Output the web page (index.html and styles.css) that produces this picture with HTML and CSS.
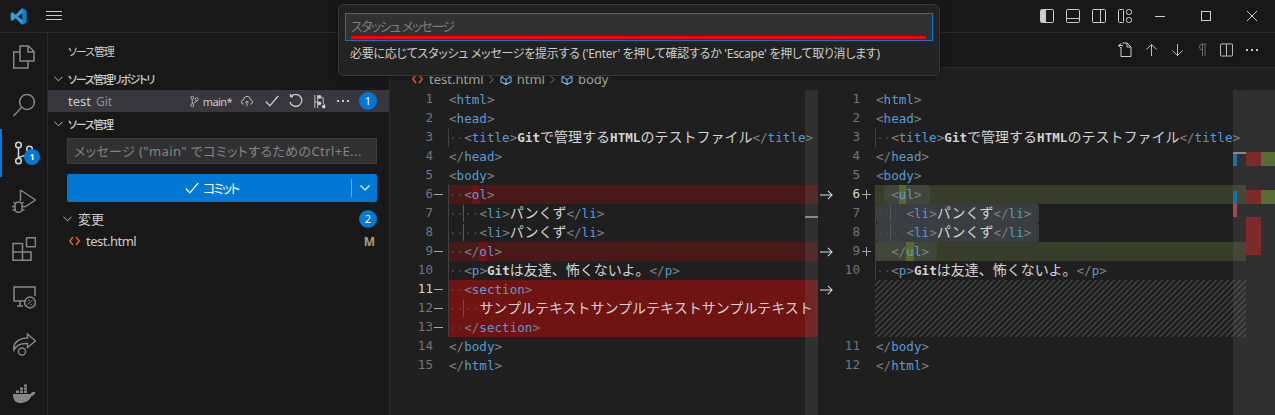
FILE: index.html
```html
<!DOCTYPE html>
<html lang="ja">
<head>
<meta charset="utf-8">
<title>ソース管理</title>
<link rel="stylesheet" href="styles.css">
</head>
<body>
<div class="app">
  <header class="titlebar">
    <svg class="logo" viewBox="0 0 100 100"><path d="M71 2 96 14V86L71 98 33 60 14 75 4 70V30L14 25 33 40ZM74 28 47 50 74 72Z" fill="#2b9fe8" fill-rule="evenodd"/><path d="M71 2 96 14V86L71 98 74 72V28Z" fill="#0f7fd0"/></svg>
    <svg class="hamburger" viewBox="0 0 16 10"><path d="M0 .5H16M0 4.5H16M0 8.5H16" stroke="#ccc" fill="none"/></svg>
    <div class="spacer"></div>
    <div class="layout-icons">
      <svg viewBox="0 0 14 14"><rect x=".5" y=".5" width="13" height="13" rx="1" class="ol"/><rect x="1" y="1" width="5" height="12" fill="#ccc"/></svg>
      <svg viewBox="0 0 14 14"><rect x=".5" y=".5" width="13" height="13" rx="1" class="ol"/><path d="M1 9.5H13" class="ol"/></svg>
      <svg viewBox="0 0 14 14"><rect x=".5" y=".5" width="13" height="13" rx="1" class="ol"/><path d="M8.5 1V13" class="ol"/></svg>
      <svg viewBox="0 0 14 14"><rect x=".5" y=".5" width="5" height="13" rx="1" class="ol"/><rect x="8.5" y=".5" width="5" height="5" rx="2" class="ol"/><rect x="8.5" y="8.5" width="5" height="5" rx="2" class="ol"/></svg>
    </div>
    <div class="win-controls">
      <span class="win"><svg viewBox="0 0 10 10"><path d="M0 5.5H10" class="ol"/></svg></span>
      <span class="win"><svg viewBox="0 0 10 10"><rect x=".5" y=".5" width="9" height="9" class="ol"/></svg></span>
      <span class="win"><svg viewBox="0 0 10 10"><path d="M0 0 10 10M10 0 0 10" class="ol"/></svg></span>
    </div>
  </header>

  <div class="quick">
    <div class="quick-input"><span>スタッシュ メッセージ</span></div>
    <div class="quick-mark"></div>
    <div class="quick-msg">必要に応じてスタッシュ メッセージを提示する ('Enter' を押して確認するか 'Escape' を押して取り消します)</div>
  </div>

  <div class="main">
    <nav class="activity">
      <a class="act"><svg viewBox="0 0 24 24"><path d="M8 7H1.7V23H16V16M8 1H16.5L22 6.5V16H8ZM16 1V7H22" class="ai"/></svg></a>
      <a class="act"><svg viewBox="0 0 24 24"><circle cx="15" cy="9" r="7.4" class="ai"/><path d="M9.7 14.3 1.5 23" class="ai"/></svg></a>
      <a class="act on"><svg viewBox="0 0 24 24"><circle cx="6.5" cy="4" r="2.8" class="ai lit"/><circle cx="6.5" cy="20" r="2.8" class="ai lit"/><circle cx="17.5" cy="8" r="2.8" class="ai lit"/><path d="M6.5 6.8V17.2M17.5 10.8C17.5 15 9 14 6.5 17.2" class="ai lit"/></svg><b class="badge small">1</b></a>
      <a class="act"><svg viewBox="0 0 24 24"><path d="M8.5 1 23.5 11 13 18M8.5 1V12" class="ai"/><path d="M3 16.5a3.500 3.500 0 0 1 7 0V20a3.500 3.500 0 0 1-7 0ZM3 17.500H0M10 17.500h3M3 21H.5M10 21h2.500M3.500 15 1.500 13M9.500 15l2-2" class="ai"/></svg></a>
      <a class="act"><svg viewBox="0 0 24 24"><rect x="14.5" y=".7" width="9" height="9" rx=".6" class="ai"/><path d="M1 6.5H10.5V15H19V23.3H1ZM1 15H10.5V23.3" class="ai"/></svg></a>
      <a class="act"><svg viewBox="0 0 24 24"><path d="M14 16H2V2H23V11M5 21H11M8 16V21" class="ai"/><circle cx="18" cy="17.5" r="5.4" class="ai"/><path d="M15.5 19.5 18 17M18 17.5l2.5-2.5M15.8 16.3l1-1h1M20.2 18.8l-1 1h-1" class="ai thin"/></svg></a>
      <a class="act"><svg viewBox="0 0 24 24"><path d="M15.5 1 23.5 8 15.5 14.5V10.5C9 10 4 12.5 2 17 .5 10 7 5 15.5 5Z" class="ai"/><circle cx="10" cy="18.5" r="3.6" class="ai"/></svg></a>
      <a class="act"><svg viewBox="0 0 24 24"><path d="M1 13H18.5C19.5 11 22 10.500 23.500 11.500 22.500 14 20.500 15 19.500 15 17.500 20 13 22 8 22 3 22 1 18 1 13Z" fill="#868686"/><path d="M4 9.500h3v2.500H4ZM8 9.500h3v2.500H8ZM12 9.500h3v2.500h-3ZM8 6.500h3v2.300H8ZM12 6.500h3v2.300h-3ZM12 3.500h3v2.300h-3Z" fill="#868686"/></svg></a>
    </nav>

    <aside class="side">
      <div class="side-title">ソース管理</div>
      <div class="sec-head"><svg class="chev" viewBox="0 0 10 6"><path d="M.5.5 5 5 9.500.5" class="ol"/></svg><span>ソース管理リポジトリ</span></div>
      <div class="repo">
        <span class="repo-name">test</span><span class="repo-kind">Git</span>
        <span class="spacer"></span>
        <svg class="ri branch" viewBox="0 0 12 16"><circle cx="3" cy="3" r="2" class="ol"/><circle cx="3" cy="13" r="2" class="ol"/><circle cx="9" cy="5" r="2" class="ol"/><path d="M3 5V11M9 7C9 10 4 9 3 11" class="ol"/></svg>
        <span class="repo-branch">main*</span>
        <svg class="ri cloud" viewBox="0 0 14 12"><path d="M3.500 9H3A2.500 2.500 0 0 1 3 4 4 4 0 0 1 11 4 2.500 2.500 0 0 1 11 9H10.500M7 11.500V5.500M5 7.500l2-2 2 2" class="ol"/></svg>
        <svg class="ri check" viewBox="0 0 14 12"><path d="M.8 6.500 4.800 10.800 13.200 1" class="ol s13"/></svg>
        <svg class="ri sync" viewBox="0 0 14 14"><path d="M4 1.700H1.500V-1M1.700 2.200A6 6 0 1 1 1 7" class="ol s13" transform="translate(0 1)"/></svg>
        <svg class="ri graph" viewBox="0 0 14 16"><path d="M2 1V15M5 1V15M2 8.500H5M8 4H11V9C11 11 13 11 13 12" class="ol"/><circle cx="7" cy="3" r="2" fill="#ccc"/><circle cx="7" cy="10" r="2" fill="#ccc"/><circle cx="11.500" cy="13.500" r="2" fill="#ccc"/></svg>
        <span class="dots"><i></i><i></i><i></i></span>
        <b class="badge">1</b>
      </div>
      <div class="sec-head second"><svg class="chev" viewBox="0 0 10 6"><path d="M.5.5 5 5 9.500.5" class="ol"/></svg><span>ソース管理</span></div>
      <div class="commit-input">メッセージ ("main" でコミットするためのCtrl+E...</div>
      <div class="commit-btn">
        <div class="commit-label"><svg viewBox="0 0 14 12"><path d="M.8 6.500 4.800 10.800 13.200 1" class="wh"/></svg><span>コミット</span></div>
        <div class="commit-more"><svg viewBox="0 0 10 6"><path d="M.5.5 5 5 9.500.5" class="wh"/></svg></div>
      </div>
      <div class="changes"><svg class="chev" viewBox="0 0 10 6"><path d="M.5.5 5 5 9.500.5" class="ol"/></svg><span>変更</span><span class="spacer"></span><b class="badge">2</b></div>
      <div class="file">
        <svg class="html-ic" viewBox="0 0 11 10"><path d="M4 1 .8 5 4 9M7 1 10.200 5 7 9" class="or"/></svg>
        <span class="file-name">test.html</span><span class="spacer"></span><b class="mod">M</b>
      </div>
    </aside>

    <section class="editor">
      <div class="actions">
        <svg class="ea wide" viewBox="0 0 16 16"><path d="M5 5V14.500H15V5L11 1H6.500M11 1V5H15M5.500 1.500 2.500 3.500 5 6M2.500 3.500H7" class="ol"/></svg>
        <svg class="ea" viewBox="0 0 14 14"><path d="M7 13.500V1M1.500 6.500 7 1 12.500 6.500" class="ol"/></svg>
        <svg class="ea" viewBox="0 0 14 14"><path d="M7 .5V13M1.500 7.500 7 13 12.500 7.500" class="ol"/></svg>
        <svg class="ea dim" viewBox="0 0 10 14"><path d="M5 1H9.500M5.500 1V13M8 1V13M5.500 7A3 3 0 0 1 5.500 1Z" class="ol"/></svg>
        <svg class="ea" viewBox="0 0 14 14"><rect x=".5" y=".5" width="13" height="13" rx="1" class="ol"/><path d="M7 1V13" class="ol"/></svg>
        <span class="dots"><i></i><i></i><i></i></span>
      </div>
      <div class="crumbs">
        <svg class="html-ic" viewBox="0 0 11 10"><path d="M4 1 .8 5 4 9M7 1 10.200 5 7 9" class="or"/></svg>
        <span>test.html</span>
        <svg class="sep" viewBox="0 0 6 10"><path d="M.5.5 5 5 .5 9.500" class="gr"/></svg>
        <svg class="cube" viewBox="0 0 12 11"><path d="M1 3 6 .7 11 3V8L6 10.300 1 8ZM1 3 6 5.500 11 3M6 5.500V10.300" class="bl"/></svg>
        <span>html</span>
        <svg class="sep" viewBox="0 0 6 10"><path d="M.5.5 5 5 .5 9.500" class="gr"/></svg>
        <svg class="cube" viewBox="0 0 12 11"><path d="M1 3 6 .7 11 3V8L6 10.300 1 8ZM1 3 6 5.500 11 3M6 5.500V10.300" class="bl"/></svg>
        <span>body</span>
      </div>
      <div class="diff">
        <div class="pane left">
          <div class="line"><span class="num">1</span><span class="sign"></span><span class="code"><i class="p">&lt;</i><i class="t">html</i><i class="p">&gt;</i></span></div>
          <div class="line"><span class="num">2</span><span class="sign"></span><span class="code"><i class="p">&lt;</i><i class="t">head</i><i class="p">&gt;</i></span></div>
          <div class="line"><span class="num">3</span><span class="sign"></span><span class="code guide"><i class="w">··</i><i class="p">&lt;</i><i class="t">title</i><i class="p">&gt;</i><i class="x">Git</i>で管理する<i class="x">HTML</i>のテストファイル<i class="p">&lt;/</i><i class="t">title</i><i class="p">&gt;</i></span></div>
          <div class="line"><span class="num">4</span><span class="sign"></span><span class="code"><i class="p">&lt;/</i><i class="t">head</i><i class="p">&gt;</i></span></div>
          <div class="line"><span class="num">5</span><span class="sign"></span><span class="code"><i class="p">&lt;</i><i class="t">body</i><i class="p">&gt;</i></span></div>
          <div class="line"><span class="num">6</span><span class="sign minus"></span><span class="code del guide"><i class="w">··</i><i class="p">&lt;</i><i class="t dc">o</i><i class="t">l</i><i class="p">&gt;</i></span></div>
          <div class="line"><span class="num">7</span><span class="sign"></span><span class="code guide"><i class="w">··</i><i class="w g2">··</i><i class="p">&lt;</i><i class="t">li</i><i class="p">&gt;</i>パンくず<i class="p">&lt;/</i><i class="t">li</i><i class="p">&gt;</i></span></div>
          <div class="line"><span class="num">8</span><span class="sign"></span><span class="code guide"><i class="w">··</i><i class="w g2">··</i><i class="p">&lt;</i><i class="t">li</i><i class="p">&gt;</i>パンくず<i class="p">&lt;/</i><i class="t">li</i><i class="p">&gt;</i></span></div>
          <div class="line"><span class="num">9</span><span class="sign minus"></span><span class="code del guide"><i class="w">··</i><i class="p">&lt;/</i><i class="t dc">o</i><i class="t">l</i><i class="p">&gt;</i></span></div>
          <div class="line"><span class="num">10</span><span class="sign"></span><span class="code guide"><i class="w">··</i><i class="p">&lt;</i><i class="t">p</i><i class="p">&gt;</i><i class="x">Git</i>は友達、怖くないよ。<i class="p">&lt;/</i><i class="t">p</i><i class="p">&gt;</i></span></div>
          <div class="line"><span class="num cur">11</span><span class="sign minus"></span><span class="code delx guide"><i class="w">··</i><i class="p">&lt;</i><i class="t">section</i><i class="p">&gt;</i></span></div>
          <div class="line"><span class="num">12</span><span class="sign minus"></span><span class="code delx guide"><i class="w">··</i><i class="w g2">··</i>サンプルテキストサンプルテキストサンプルテキスト</span></div>
          <div class="line"><span class="num">13</span><span class="sign minus"></span><span class="code delx guide"><i class="w">··</i><i class="p">&lt;/</i><i class="t">section</i><i class="p">&gt;</i></span></div>
          <div class="line"><span class="num">14</span><span class="sign"></span><span class="code"><i class="p">&lt;/</i><i class="t">body</i><i class="p">&gt;</i></span></div>
          <div class="line"><span class="num">15</span><span class="sign"></span><span class="code"><i class="p">&lt;/</i><i class="t">html</i><i class="p">&gt;</i></span></div>
          <div class="slider"><div class="slider-mark"></div></div>
        </div>
        <div class="pane right">
          <div class="lines">
            <div class="line"><span class="arrow"></span><span class="num">1</span><span class="sign"></span><span class="code"><i class="p">&lt;</i><i class="t">html</i><i class="p">&gt;</i></span></div>
            <div class="line"><span class="arrow"></span><span class="num">2</span><span class="sign"></span><span class="code"><i class="p">&lt;</i><i class="t">head</i><i class="p">&gt;</i></span></div>
            <div class="line"><span class="arrow"></span><span class="num">3</span><span class="sign"></span><span class="code guide"><i class="w">··</i><i class="p">&lt;</i><i class="t">title</i><i class="p">&gt;</i><i class="x">Git</i>で管理する<i class="x">HTML</i>のテストファイル<i class="p">&lt;/</i><i class="t">title</i><i class="p">&gt;</i></span></div>
            <div class="line"><span class="arrow"></span><span class="num">4</span><span class="sign"></span><span class="code"><i class="p">&lt;/</i><i class="t">head</i><i class="p">&gt;</i></span></div>
            <div class="line"><span class="arrow"></span><span class="num">5</span><span class="sign"></span><span class="code"><i class="p">&lt;</i><i class="t">body</i><i class="p">&gt;</i></span></div>
            <div class="line"><span class="arrow"><svg viewBox="0 0 14 10"><path d="M0 5H13M8.500.5 13 5 8.500 9.500" class="ar"/></svg></span><span class="num cur">6</span><span class="sign plus"></span><span class="code ins guide"><i class="w half">·</i><span class="sel"><i class="w half">·</i><i class="p">&lt;</i><i class="t ic">u</i><i class="t">l</i><i class="p">&gt;</i></span></span></div>
            <div class="line"><span class="arrow"></span><span class="num">7</span><span class="sign"></span><span class="code guide"><span class="sel"><i class="w">··</i><i class="w g2">··</i><i class="p">&lt;</i><i class="t">li</i><i class="p">&gt;</i>パンくず<i class="p">&lt;/</i><i class="t">li</i><i class="p">&gt;</i></span></span></div>
            <div class="line"><span class="arrow"></span><span class="num">8</span><span class="sign"></span><span class="code guide"><span class="sel"><i class="w">··</i><i class="w g2">··</i><i class="p">&lt;</i><i class="t">li</i><i class="p">&gt;</i>パンくず<i class="p">&lt;/</i><i class="t">li</i><i class="p">&gt;</i></span></span></div>
            <div class="line"><span class="arrow"><svg viewBox="0 0 14 10"><path d="M0 5H13M8.500.5 13 5 8.500 9.500" class="ar"/></svg></span><span class="num">9</span><span class="sign plus"></span><span class="code ins guide"><span class="sel"><i class="w">··</i><i class="p">&lt;/</i><i class="t ic">u</i><i class="t">l</i><i class="p">&gt;</i></span></span></div>
            <div class="line"><span class="arrow"></span><span class="num">10</span><span class="sign"></span><span class="code guide"><i class="w">··</i><i class="p">&lt;</i><i class="t">p</i><i class="p">&gt;</i><i class="x">Git</i>は友達、怖くないよ。<i class="p">&lt;/</i><i class="t">p</i><i class="p">&gt;</i></span></div>
            <div class="line hatch-row"><span class="arrow"><svg viewBox="0 0 14 10"><path d="M0 5H13M8.500.5 13 5 8.500 9.500" class="ar"/></svg></span><span class="num"></span><span class="sign"></span><span class="code hatch"></span></div>
            <div class="line"><span class="arrow"></span><span class="num">11</span><span class="sign"></span><span class="code"><i class="p">&lt;/</i><i class="t">body</i><i class="p">&gt;</i></span></div>
            <div class="line"><span class="arrow"></span><span class="num">12</span><span class="sign"></span><span class="code"><i class="p">&lt;/</i><i class="t">html</i><i class="p">&gt;</i></span></div>
            <div class="slider"><div class="tick t1"></div><div class="tick t2"></div><div class="tick t3"></div><div class="tick t4"></div></div>
          </div>
          <div class="overview">
            <div class="ov-row r1"><i class="red"></i><i class="grn"></i></div>
            <div class="ov-row r2"><i class="red"></i><i class="grn"></i></div>
            <div class="ov-row r3"><i class="red"></i></div>
          </div>
        </div>
      </div>
    </section>
  </div>
</div>
</body>
</html>
```
FILE: styles.css
```css
* { box-sizing: border-box; }
html, body { margin: 0; height: 100%; }
body { background: #181818; color: #ccc; font: 13px "Noto Sans", "Noto Sans CJK JP", sans-serif; font-feature-settings: "palt"; overflow: hidden; }
i { font-style: normal; }
svg { display: block; flex: none; }
.spacer { flex: 1; }
.ol { fill: none; stroke: #ccc; stroke-width: 1; }
.s13 { stroke-width: 1.3; }
.wh { fill: none; stroke: #fff; stroke-width: 1.2; }
.or { fill: none; stroke: #e8592a; stroke-width: 1.6; }
.gr { fill: none; stroke: #999; stroke-width: 1; }
.bl { fill: none; stroke: #75beff; stroke-width: 1.1; }
.ar { fill: none; stroke: #ddd; stroke-width: 1.1; }
.ai { fill: none; stroke: #868686; stroke-width: 1.5; }
.ai.lit { stroke: #d7d7d7; }
.ai.thin { stroke-width: 1; }

.app { height: 415px; display: flex; flex-direction: column; position: relative; }

.titlebar { height: 33px; flex: none; display: flex; align-items: center; border-bottom: 1px solid #2b2b2b; padding-left: 10px; }
.logo { width: 17px; height: 17px; }
.hamburger { width: 16px; height: 10px; margin-left: 19px; }
.layout-icons { display: flex; gap: 12px; margin-right: 5px; }
.layout-icons svg { width: 14px; height: 14px; }
.win-controls { display: flex; }
.win { width: 46px; height: 32px; display: flex; align-items: center; justify-content: center; }
.win svg { width: 10px; height: 10px; }

.quick { position: absolute; left: 338px; top: 4px; width: 602px; height: 72px; background: #222; border: 1px solid #383838; border-radius: 6px; padding: 8px 6px; z-index: 5; box-shadow: 0 0 8px rgba(0,0,0,.4); }
.quick-input { height: 28px; background: #313131; border: 1px solid #0078d4; color: #7d7d7d; padding-left: 5px; line-height: 25px; font-size: 13px; letter-spacing: -1.600px; word-spacing: 1px; }
.quick-mark { position: absolute; left: 12px; top: 31px; width: 575px; height: 3px; background: #f00; }
.quick-msg { margin: 4px 0 0 5px; font-size: 12px; line-height: 18px; color: #ccc; white-space: nowrap; letter-spacing: -.27px; }

.main { flex: 1; display: flex; min-height: 0; }
.activity { width: 48px; flex: none; border-right: 1px solid #2b2b2b; }
.act { height: 48px; display: flex; align-items: center; justify-content: center; position: relative; }
.act svg { width: 24px; height: 24px; }
.act.on { box-shadow: inset 2px 0 0 #0078d4; }
.badge { width: 18px; height: 18px; border-radius: 50%; background: #0078d4; color: #fff; font: 11px/18px "Noto Sans", sans-serif; text-align: center; flex: none; }
.badge.small { position: absolute; left: 24px; top: 20px; width: 16px; height: 16px; line-height: 16px; font-size: 9px; font-weight: 700; }

.side { width: 342px; flex: none; background: #181818; border-right: 1px solid #2b2b2b; display: flex; flex-direction: column; }
.side-title { height: 35px; padding-left: 20px; font-size: 11px; line-height: 38px; color: #ccc; letter-spacing: -1.100px; }
.sec-head { height: 22px; display: flex; align-items: center; font-size: 11px; font-weight: 500; color: #ccc; padding-left: 6px; letter-spacing: -1.300px; }
.sec-head span { padding-bottom: 1px; }
.sec-head.second { height: 24px; }
.chev { width: 9px; height: 6px; margin-right: 5px; }
.repo { height: 22px; background: #37373d; display: flex; align-items: center; padding: 0 12px 0 20px; }
.repo-name { font-size: 13px; }
.repo-kind { font-size: 12px; color: #8f8f93; margin-left: 5px; }
.branch { width: 9px; height: 13px; margin-right: 4px; }
.repo-branch { font-size: 11px; margin-right: 9px; letter-spacing: -.6px; }
.cloud { width: 12px; height: 11px; margin-right: 12px; }
.check { width: 14px; height: 12px; margin-right: 10px; }
.sync { width: 14px; height: 14px; margin-right: 10px; }
.graph { width: 13px; height: 15px; margin-right: 11px; }
.dots { display: flex; gap: 3px; width: 13px; margin-right: 9px; }
.dots i { width: 2px; height: 2px; background: #ccc; }
.commit-input { height: 26px; margin: 2px 12px 0 19px; background: #313131; border: 1px solid #3c3c3c; color: #858585; font-size: 13px; line-height: 24px; padding-left: 6px; white-space: nowrap; overflow: hidden; letter-spacing: .4px; }
.commit-btn { height: 28px; margin: 10px 12px 0 19px; background: #0078d4; border-radius: 2px; display: flex; align-items: center; color: #fff; }
.commit-label { flex: 1; display: flex; align-items: center; justify-content: center; gap: 4px; font-size: 13px; padding-left: 5px; letter-spacing: -2px; }
.commit-label span { padding-bottom: 2px; }
.commit-label svg { width: 14px; height: 12px; }
.commit-more { width: 26px; height: 18px; border-left: 1px solid rgba(255,255,255,.4); display: flex; align-items: center; justify-content: center; }
.commit-more svg { width: 10px; height: 6px; }
.changes { height: 22px; margin-top: 6px; display: flex; align-items: center; padding: 0 12px 0 15px; font-size: 13px; }
.changes .chev { margin-right: 6px; }
.changes span { padding-bottom: 2px; }
.changes .spacer { padding: 0; }
.file { height: 22px; display: flex; align-items: center; padding: 0 14px 0 21px; font-size: 13px; }
.file-name { letter-spacing: -.5px; }
.html-ic { width: 11px; height: 10px; }
.file .html-ic { margin-right: 6px; }
.mod { font-size: 12px; font-weight: 700; color: #b29b76; }

.editor { flex: 1; min-width: 0; display: flex; flex-direction: column; background: #1f1f1f; }
.actions { height: 35px; flex: none; background: #181818; border-bottom: 1px solid #2b2b2b; display: flex; align-items: center; justify-content: flex-end; gap: 13px; padding: 0 16px 0 0; }
.ea { height: 14px; width: 13px; }
.ea.wide { width: 16px; height: 16px; }
.ea.dim { width: 10px; opacity: .45; }
.actions .dots { margin: 0; width: 13px; }
.crumbs { height: 22px; flex: none; display: flex; align-items: center; padding-left: 22px; font-size: 13px; color: #a9a9a9; }
.crumbs .html-ic { margin-right: 6px; }
.sep { width: 5px; height: 9px; margin: 0 5px; }
.cube { width: 12px; height: 11px; margin: 0 5px 0 1px; }

.diff { flex: 1; min-height: 0; display: flex; }
.pane { position: relative; overflow: hidden; }
.pane.left { width: 428px; flex: none; }
.pane.right { flex: 1; display: flex; min-width: 0; }
.lines { flex: 1; min-width: 0; position: relative; overflow: hidden; }
.overview { width: 29px; flex: none; background: #2f2f2f; position: relative; display: flex; flex-direction: column; }

.line { height: 19px; display: flex; font: 14px/17px "Noto Sans CJK JP", sans-serif; font-feature-settings: normal; color: #d4d4d4; white-space: pre; }
.num, .sign, .p, .t, .w, .x { font-family: "DejaVu Sans Mono", monospace; font-size: 12.600px; }
.num { width: 43px; flex: none; text-align: right; color: #6e7681; }
.num.cur { color: #d4d4d4; }
.sign { width: 15px; flex: none; position: relative; }
.sign.minus::before { content: ""; position: absolute; left: 1px; top: 9px; width: 9px; height: 1px; background: #aaa; }
.sign.plus::before { content: ""; position: absolute; left: 2px; top: 9px; width: 9px; height: 1px; background: #aaa; }
.sign.plus::after { content: ""; position: absolute; left: 6px; top: 5px; width: 1px; height: 9px; background: #aaa; }
.code { flex: 1; min-width: 0; padding-left: 1px; display: block; }
.guide { box-shadow: inset 1px 0 0 #404040; }
.p { color: #808080; }
.t { color: #569cd6; }
.x { color: #d4d4d4; font-weight: 700; }
.w { color: #4a4a4a; display: inline-block; width: 15.200px; }
.w.half { width: 7.600px; }
.w.g2 { box-shadow: -1px 0 0 #585858; }
.del { background: #4b1818; }
.delx { background: #6f1313; }
.ins { background: #373d29; }
.dc { background: #6f1313; padding: 2px 0; }
.ic { background: #566b2d; padding: 2px 0; }
.sel { display: inline-block; height: 19px; vertical-align: top; background: #3a3d41; border-radius: 3px; padding-right: 8px; }
.ins .sel { background: #40463a; }
.arrow { width: 18px; flex: none; display: flex; align-items: center; height: 19px; padding-left: 2px; }
.arrow svg { width: 13px; height: 10px; }
.right .num { width: 24px; }
.hatch-row { height: 57px; }
.hatch { background: linear-gradient(-45deg, #404040 12.500%, transparent 12.500%, transparent 50%, #404040 50%, #404040 62.500%, transparent 62.500%, transparent 100%) 0 0 / 6px 6px; }

.slider { position: absolute; right: 0; top: 0; bottom: 0; width: 13px; background: rgba(121,121,121,.2); }
.slider-mark { position: absolute; left: 0; right: 0; top: 126px; height: 2px; background: #8a8a8a; }
.tick { position: absolute; }
.t1 { left: 0; right: 0; top: 62px; height: 2px; background: #8a8a8a; }
.t2 { left: 0; width: 4px; top: 64px; height: 12px; background: #1b6faa; }
.t3 { left: 0; width: 4px; top: 101px; height: 13px; background: #1b6faa; }
.t4 { left: 0; width: 4px; top: 114px; height: 13px; background: #a04a4a; }
.ov-row { position: absolute; left: 0; right: 0; display: flex; }
.ov-row i { display: block; height: 100%; }
.red { width: 15px; background: #7f2a2a; }
.grn { width: 14px; background: #5a6b33; }
.r1 { top: 62px; height: 14px; }
.r2 { top: 100px; height: 14px; }
.r3 { top: 127px; height: 38px; }
```
